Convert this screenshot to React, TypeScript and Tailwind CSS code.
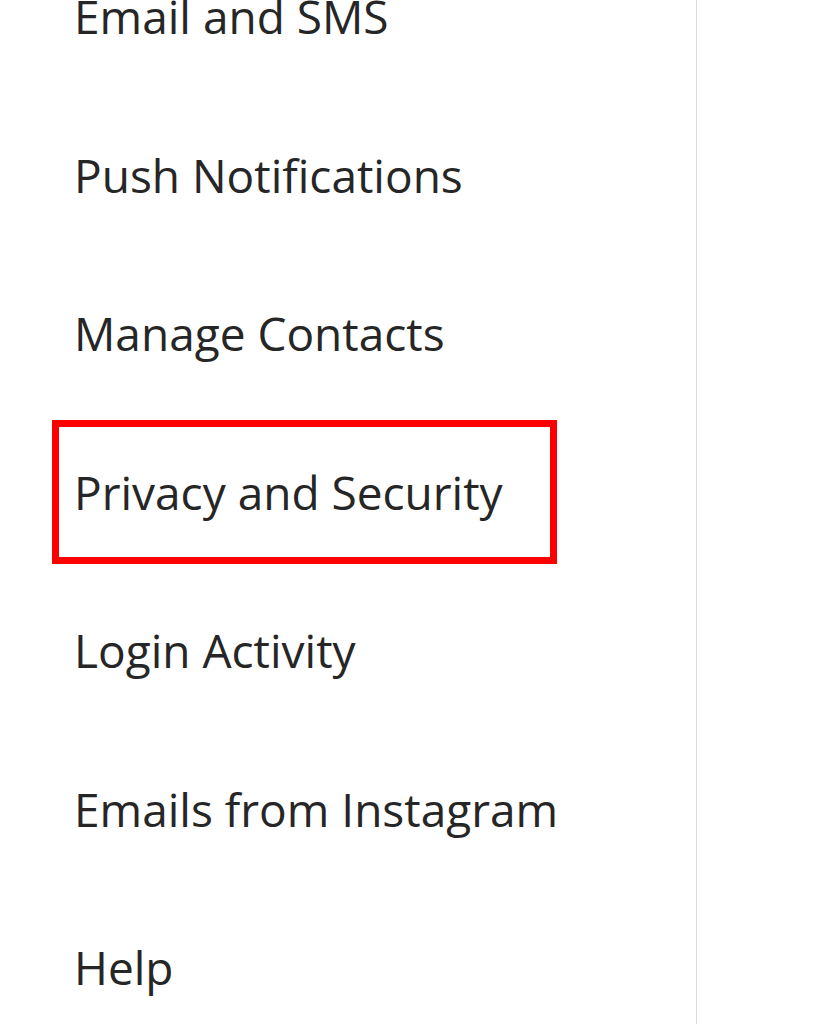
const items = [
  "Email and SMS",
  "Push Notifications",
  "Manage Contacts",
  "Privacy and Security",
  "Login Activity",
  "Emails from Instagram",
  "Help",
];

export default function App() {
  const selected = "Privacy and Security";
  return (
    <main
      className="h-[1024px] w-[834px] overflow-hidden bg-white"
      style={{ fontFamily: '"Segoe UI", "Open Sans", sans-serif' }}
    >
      <div className="flex h-full w-[697px] flex-col border-r border-[#dbdbdb]">
        <ul className="-mt-[56px] pl-[52px]">
          {items.map((label) => (
            <li
              key={label}
              className={
                "mb-[14.5px] flex h-[144px] w-[505px] items-center whitespace-nowrap border-[7px] pl-[15px] text-[46px] leading-none text-[#262626] " +
                (label === selected ? "border-[#ff0000]" : "border-transparent")
              }
            >
              {label}
            </li>
          ))}
        </ul>
      </div>
    </main>
  );
}
